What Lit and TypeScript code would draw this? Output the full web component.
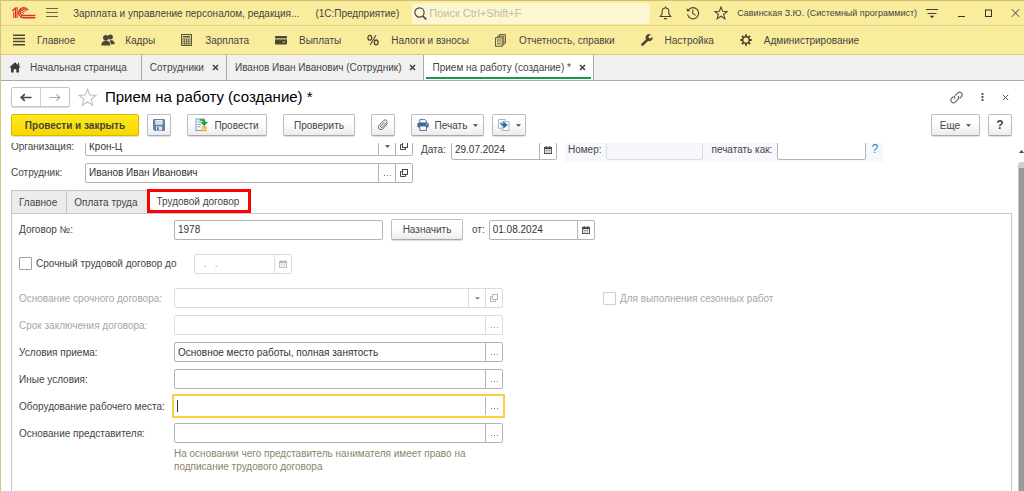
import { LitElement, html, css, svg, TemplateResult } from "lit";
import { customElement, state } from "lit/decorators.js";
import { classMap } from "lit/directives/class-map.js";

const icon = (w: number, h: number, body: unknown, cls = "") =>
  html`<svg class="ico ${cls}" width=${w} height=${h} viewBox="0 0 ${w} ${h}" aria-hidden="true">${body}</svg>`;

const logo = icon(26, 14, svg`
  <g fill="none" stroke="#d9302c">
    <path d="M1.2 4.8 4.6 2.2V12" stroke-width="1.4"/>
    <path d="M2.8 5.4V12M6.2 1V12" stroke-width="1"/>
    <path d="M17 4.2A5 5 0 1 0 12.6 11.8H24.4" stroke-width="1.5"/>
    <path d="M15 5.2A2.9 2.9 0 1 0 12.8 9.5H24.4" stroke-width="1.3"/>
    <path d="M13.6 6.2a1 1 0 1 0-.6 1.3" stroke-width="1"/>
  </g>`);
const burger = icon(12, 12, svg`<path d="M0 1.5H12M0 5.5H12M0 9.5H12" stroke="#6b6644" stroke-width="1"/>`);
const magnifier = icon(13, 13, svg`<circle cx="5.5" cy="5.5" r="4.6" fill="none" stroke="#444" stroke-width="1.2"/><path d="M8.8 9 12.2 12.4" stroke="#444" stroke-width="1.6"/>`);
const bell = icon(13, 14, svg`<path d="M1 10.5H12L9.9 8.2V5.4A3.4 3.4 0 0 0 3.1 5.4V8.2Z" fill="none" stroke="#444" stroke-width="1.1" stroke-linejoin="round"/><path d="M6.5 2V.6M5 12.6H8" stroke="#444" stroke-width="1.2"/>`);
const history = icon(14, 14, svg`<path d="M2.4 4A5.6 5.6 0 1 1 1.5 8.4M6.8 3.4V7.4L9.6 9.4" fill="none" stroke="#4a4734" stroke-width="1.1"/><path d="M.4 2.2 1.2 5.6 4.6 4.9Z" fill="#4a4734"/>`);
const starPath = "M9 1.2 11.1 6.7 17 7 12.4 10.7 14 16.4 9 13.2 4 16.4 5.6 10.7 1 7 6.9 6.7Z";
const star = html`<svg class="ico" width="14" height="14" viewBox="0 0 18 18" aria-hidden="true"><path d=${starPath} fill="none" stroke="#4a4734" stroke-width="1.4"/></svg>`;
const bigStar = html`<svg class="ico" width="19" height="19" viewBox="0 0 18 18" aria-hidden="true"><path d=${starPath} fill="none" stroke="#b9bdc4" stroke-width="1"/></svg>`;
const userMenu = icon(13, 13, svg`<path d="M0 2.5H12M1.5 6.5H10.5" stroke="#444" stroke-width="1.1"/><path d="M3.8 8.8H8.2L6 11.2Z" fill="#333"/>`);
const winMin = icon(9, 10, svg`<path d="M1 8.5H8" stroke="#333"/>`);
const winMax = icon(9, 10, svg`<rect x="1.5" y="2" width="6" height="6.5" fill="none" stroke="#333"/>`);
const winClose = icon(9, 10, svg`<path d="M.8 1.2 8.2 8.8M8.2 1.2.8 8.8" stroke="#444" stroke-width="1"/>`);

const mList = icon(12, 12, svg`<path d="M0 1.2H12M0 4.4H12M0 7.6H12M0 10.8H12" stroke="#4a4734" stroke-width="1.5"/>`);
const mPeople = icon(14, 12, svg`<g fill="#4a4734"><circle cx="9.4" cy="3" r="2.5"/><path d="M8.6 6.2H11C13 6.8 13.6 8 13.6 10.2H10Z"/><circle cx="4.8" cy="3.8" r="2.7"/><path d="M.3 11.6C.3 8.6 1.6 7.6 4 6.6H5.8C8.4 7.6 9.3 8.6 9.3 11.6Z"/></g>`);
const mCalc = icon(11, 12, svg`<rect x=".6" y=".6" width="9.8" height="10.8" fill="none" stroke="#4a4734" stroke-width="1"/><path d="M2 2.8H9" stroke="#4a4734" stroke-width="1.4"/><path d="M1 5H10M1 7.2H10M1 9.3H10M3.3 5V11M5.5 5V11M7.7 5V11" stroke="#4a4734" stroke-width=".7"/>`);
const mCard = icon(12, 12, svg`<rect x="0" y="2" width="12" height="8.4" rx="1" fill="#4a4734"/><path d="M0 4.9H12" stroke="#faec9d" stroke-width="1"/><path d="M7.6 8H10.4" stroke="#faec9d" stroke-width=".8"/>`);
const mPercent = icon(12, 12, svg`<g fill="none" stroke="#4a4734"><ellipse cx="2.8" cy="3.8" rx="1.9" ry="2.4" stroke-width="1.3"/><ellipse cx="9.2" cy="8.4" rx="1.9" ry="2.4" stroke-width="1.3"/><path d="M8.9 1.2 3.1 11" stroke-width="1.1"/></g>`);
const mDocs = icon(11, 13, svg`<g fill="none" stroke="#4a4734" stroke-width=".9"><path d="M4.4 2V.6H10.4V9.2H9.2M2.6 3.6V2.2H8.8V10.8H7.4"/><rect x=".6" y="3.8" width="6.6" height="8.4"/><path d="M2 6H5.8M2 7.8H3.6M2 9.8H5.8M4.6 7.8H5.8"/></g>`);
const mWrench = icon(12, 12, svg`<path d="M1.5 10.5 6.6 5.6" stroke="#4a4734" stroke-width="2.6" stroke-linecap="round"/><path d="M9.9.6A3.6 3.6 0 1 0 11.6 3L9.2 4.4 7.7 3.9 7.6 2.2Z" fill="#4a4734"/>`);
const mGear = icon(12, 12, svg`<circle cx="6" cy="6" r="3.3" fill="none" stroke="#4a4734" stroke-width="1.5"/><g stroke="#4a4734" stroke-width="1.9"><path d="M6 .2V2.4M6 9.6V11.8M.2 6H2.4M9.6 6H11.8M1.9 1.9 3.4 3.4M8.6 8.6 10.1 10.1M1.9 10.1 3.4 8.6M8.6 3.4 10.1 1.9"/></g>`);
const home = icon(12, 11, svg`<path d="M6 .3 11.8 5.6H10V10.6H7.3V7.2H4.7V10.6H2V5.6H.2Z" fill="#3c3c3c"/><path d="M9 .8H10.2V4H9Z" fill="#3c3c3c"/>`);
const cross = icon(7, 7, svg`<path d="M1 1 6 6M6 1 1 6" stroke="#444" stroke-width="1.6"/>`);

const arrowL = icon(12, 9, svg`<path d="M11.5 4.5H2M4.8 1.2 1.2 4.5 4.8 7.8" fill="none" stroke="#444" stroke-width="1.6"/>`);
const arrowR = icon(12, 9, svg`<path d="M.5 4.5H10.4M7.4 1.4 10.8 4.5 7.4 7.6" fill="none" stroke="#aaa" stroke-width="1.2"/>`);
const save = icon(12, 12, svg`<path d="M.6.6H11.4V11.4H1.6L.6 10.4Z" fill="#5d86ad" stroke="#44688c" stroke-width=".8"/><rect x="2.4" y="1" width="7.2" height="4.6" fill="#f4f7fa"/><path d="M3.2 2.6H8.8M3.2 4.1H8.8" stroke="#9db4c9" stroke-width=".6"/><rect x="3" y="7.4" width="6" height="4" fill="#dbe5ee"/><rect x="4" y="8.2" width="1.6" height="2.6" fill="#44688c"/>`);
const post = icon(13, 14, svg`<rect x="1" y="1" width="8.4" height="11.6" fill="#f3f7fb" stroke="#6e8fb0" stroke-width=".9"/><path d="M2.6 4H6M2.6 6.4H6M2.6 8.8H5" stroke="#6e8fb0" stroke-width=".8"/><path d="M4.6 1.2C8 .5 10.6 1.6 10.8 4H13L9.2 8 5.4 4H7.8C7.8 3 6.6 2.6 4.6 2.8Z" fill="#20a34a"/><path d="M6.6 8.6H12V13.2H6.6Z" fill="#e8b83e"/><path d="M6.6 10.2H12M6.6 11.7H12" stroke="#fbe9ad" stroke-width=".6"/>`);
const clip = icon(12, 12, svg`<path d="M10.6 4.4 5.8 9.8A2.5 2.5 0 0 1 2 6.4L6.8 1.4A1.8 1.8 0 0 1 9.4 3.9L5.2 8.4A1 1 0 0 1 3.8 7L7.6 3" fill="none" stroke="#666" stroke-width="1"/>`);
const printer = icon(12, 12, svg`<path d="M2.8.6H8L9.4 2V4H2.8Z" fill="#fff" stroke="#3f6a92" stroke-width=".9"/><rect x=".4" y="3.8" width="11.2" height="4.8" rx="1" fill="#3f6a92"/><rect x="2.8" y="7" width="6.6" height="4.4" fill="#fff" stroke="#3f6a92" stroke-width=".9"/><path d="M9 5.2H10.4" stroke="#fff" stroke-width=".8"/>`);
const basedOn = icon(12, 12, svg`<rect x=".6" y=".6" width="6.6" height="8.6" fill="#fff" stroke="#8ea6bc" stroke-width=".8"/><rect x="4" y="2.8" width="7" height="8.6" fill="#fff" stroke="#8ea6bc" stroke-width=".8"/><path d="M1.8 3C2 5.6 3.4 6.8 5.2 6.8V9.8L9.8 6 5.2 2.5V5C4 5 2.8 4.6 1.8 3Z" fill="#2c6496"/>`);
const caret = icon(5, 3, svg`<path d="M0 .2H5L2.5 2.8Z" fill="#444"/>`);
const link = icon(13, 13, svg`<g fill="none" stroke="#666" stroke-width="1.1"><path d="M5 8A2.7 2.7 0 0 1 5.4 4.4L7.8 1.9A2.6 2.6 0 0 1 11.6 5.4L9.6 7.6"/><path d="M8 5A2.7 2.7 0 0 1 7.6 8.6L5.2 11.1A2.6 2.6 0 0 1 1.4 7.6L3.4 5.4"/></g>`);
const kebab = icon(3, 10, svg`<path d="M.5 1H2.5V3H.5ZM.5 4H2.5V6H.5ZM.5 7H2.5V9H.5Z" fill="#555"/>`);
const thinX = icon(7, 7, svg`<path d="M.8.8 6.2 6.2M6.2.8.8 6.2" stroke="#555" stroke-width="1"/>`);
const openIco = icon(8, 8, svg`<g fill="none" stroke="currentColor" stroke-width="1"><rect x="2.5" y=".5" width="5" height="5"/><path d="M1.9 2.5H.5V7.5H5.5V6"/></g>`);
const calendar = icon(8, 8, svg`<rect x=".4" y="1.4" width="7.2" height="6.2" fill="none" stroke="currentColor" stroke-width=".9"/><path d="M.4 2.4H7.6" stroke="currentColor" stroke-width="1.6"/><path d="M2.2 0V2M5.8 0V2" stroke="currentColor" stroke-width="1.1"/><path d="M1.6 4.4H6.4M1.6 6H6.4" stroke="currentColor" stroke-width=".9" stroke-dasharray="1 .8"/>`);
const dots = icon(7, 2, svg`<path d="M0 0H1V1H0ZM3 0H4V1H3ZM6 0H7V1H6Z" fill="#777"/>`, "dots");
const scrollUp = icon(5, 3, svg`<path d="M0 3H5L2.5 0Z" fill="#444"/>`);

const glyphs: Record<string, TemplateResult> = { pick: dots, open: openIco, drop: caret, date: calendar };
const glyphNames: Record<string, string> = { pick: "Выбрать", open: "Открыть", drop: "Список", date: "Календарь" };

interface FieldOptions { value?: string; buttons?: string[]; size?: string; disabled?: boolean; focused?: boolean; }

@customElement("app-root")
export class AppRoot extends LitElement {
  static styles = css`
    :host { display: block; height: 100vh; font: 10px/13px "Liberation Sans", Arial, sans-serif; color: #444; }
    * { box-sizing: border-box; }
    button, input { font: inherit; color: inherit; margin: 0; padding: 0; }
    button { background: none; border: 0; white-space: nowrap; }
    svg { display: block; flex: none; }
    .window { display: flex; flex-direction: column; height: 100%; background: #fff; border-left: 1px solid #d2c480; overflow: hidden; }
    .titlebar { display: flex; align-items: center; height: 26px; flex: none; padding: 0 4px 0 10px; background: #faec9d; border-top: 1px solid #d2bf6e; border-bottom: 1px solid #dfd083; white-space: nowrap; }
    .appname { padding-left: 15px; }
    .platform { padding-left: 16px; }
    .burger { padding-left: 9px; }
    .search { display: flex; align-items: center; gap: 2px; flex: 0 1 238px; height: 21px; margin: 0 9px 0 13px; padding-left: 2px; background: #fdf6d2; border-radius: 3px; }
    .search input { flex: 1; min-width: 0; border: 0; background: none; outline: 0; font-size: 11px; }
    .search input::placeholder { color: #c3bda0; opacity: 1; }
    .sys { display: flex; align-items: center; gap: 14px; }
    .user { padding: 0 9px; font-size: 9px; }
    .winbtns { display: flex; gap: 18px; margin-left: auto; }
    .menu { display: flex; align-items: center; gap: 26px; height: 29px; flex: none; padding-left: 12px; background: #faec9d; border-bottom: 1px solid #dccb7c; }
    .menu a { display: flex; align-items: center; color: #444; text-decoration: none; white-space: nowrap; }
    .menu .slot { width: 24px; }
    .tabs { display: flex; height: 26px; flex: none; background: #f0f0f0; border-bottom: 1px solid #a9a9a9; }
    .tab { display: flex; align-items: center; gap: 8px; padding: 0 7px 0 8px; border-right: 1px solid #a9a9a9; white-space: nowrap; }
    .tab.home { gap: 9px; padding: 0 14px 0 8px; }
    .tab.active { position: relative; background: #fff; }
    .tab.active::after { content: ""; position: absolute; left: 2px; right: 2px; bottom: 1px; height: 2px; background: #159a4c; }
    .head { display: flex; align-items: center; height: 32px; flex: none; padding: 0 15px 0 10px; }
    .nav { display: flex; width: 59px; height: 20px; border: 1px solid #c4c4c4; border-radius: 2px; box-shadow: 0 1px 1px #ddd; }
    .nav button { flex: 1; display: grid; place-items: center; }
    .nav button + button { border-left: 1px solid #d0d0d0; }
    .fav { padding: 0 8px; }
    h1 { margin: 0; font: 15px/20px "Liberation Sans", Arial, sans-serif; color: #000; }
    .headicons { display: flex; align-items: center; gap: 18px; margin-left: auto; }
    .cmds { display: flex; gap: 16px; height: 30px; flex: none; padding: 1px 12px 0 10px; align-items: flex-start; }
    .group { display: flex; gap: 8px; }
    .push { margin-left: auto; }
    .btn { display: flex; align-items: center; justify-content: center; gap: 6px; height: 22px; padding: 0; color: #444; background: linear-gradient(#fff 40%, #ececec); border: 1px solid #bdbdbd; border-bottom-color: #a8a8a8; border-radius: 2px; box-shadow: 0 1px 1px #ddd; }
    .btn.main { width: 128px; font-weight: bold; background: linear-gradient(#ffe81c, #f7d800); border-color: #d8b900; }
    .btn.small { width: 24px; }
    .btn.post { width: 80px; }
    .btn.check { width: 72px; }
    .btn.print { width: 73px; }
    .btn.based { width: 34px; }
    .btn.more { width: 49px; }
    .btn.assign { width: 72px; height: 21px; margin-left: 8px; }
    .btn .q { font-size: 12px; font-weight: bold; }
    .body { display: flex; flex: 1; min-height: 0; }
    .form { flex: 1; display: flex; flex-direction: column; min-width: 0; overflow: hidden; padding: 0 6px 0 10px; }
    .topfields { display: flex; flex: none; align-items: center; height: 25px; margin-top: -6px; }
    .lbl { width: 74px; flex: none; white-space: nowrap; }
    .org { display: flex; align-items: center; padding-bottom: 7px; }
    .date { display: flex; align-items: center; gap: 5px; padding-left: 8px; }
    .numbox { display: flex; align-items: center; align-self: stretch; gap: 5px; margin-left: 8px; padding-left: 3px; background: #f7f8fe; }
    .as { padding-left: 3px; }
    .help { width: 12px; color: #1a84c9; font-size: 12px; text-decoration: none; }
    .person { display: flex; align-items: center; flex: none; height: 21px; }
    .field { display: flex; height: 20px; background: #fff; border: 1px solid #b4b4b4; border-radius: 2px; color: #333; }
    .field input { flex: 1; min-width: 0; width: 0; padding: 0 3px; border: 0; outline: 0; background: none; color: #333; }
    .field button { width: 17px; display: grid; place-items: center; border-left: 1px solid #b4b4b4; color: #444; }
    .field button .dots { margin-top: 6px; }
    .field.off { border-color: #dcdcdc; }
    .field.off button { border-color: #dcdcdc; color: #999; }
    .field.off input { color: #999; }
    .field.off .ico { opacity: 0.7; }
    .field.wide { width: 328px; }
    .field.row { width: 329px; }
    .field.num { width: 209px; }
    .field.day { width: 106px; }
    .field.until { width: 98px; }
    .field.short { width: 97px; background: none; }
    .field.as-print { width: 89px; }
    .field.focused { height: 24px; width: 333px; margin: -2px; border: 2px solid #fad03c; border-radius: 0; padding: 1px; }
    .field.focused input { padding: 0 2px; background: linear-gradient(#333, #333) 2px 50% / 1px 12px no-repeat; }
    .pagetabs { display: flex; flex: none; margin-top: 6px; height: 24px; }
    .pagetab { height: 23px; margin-top: 1px; padding: 0 9px 0 7px; background: #ececec; border: 1px solid #c4c4c4; border-right: 0; border-bottom: 0; }
    .pagetab.active { height: 24px; margin-top: 0; background: #fff; border: 3px solid #f00; }
    .panel { flex: 1; border: 1px solid #c8c8c8; border-bottom: 0; padding: 5px 7px 0; }
    .line { display: flex; align-items: center; height: 21px; }
    .term { margin: 13px 0 14px; }
    .tick { appearance: none; width: 13px; height: 13px; flex: none; margin-right: 4px; border: 1px solid #a0a0a0; border-radius: 1px; background: #fff; }
    .tick:disabled { border-color: #cfcfcf; }
    .term label { width: 158px; }
    .from { padding: 0 4px 0 9px; }
    .grid { display: grid; grid-template-columns: 155px 329px auto; row-gap: 7px; grid-auto-rows: 20px; align-items: center; }
    .grid > label { grid-column: 1; white-space: nowrap; }
    .muted { color: #a6a6a6; }
    .season { display: flex; align-items: center; grid-column: 3; padding-left: 100px; color: #a6a6a6; white-space: nowrap; }
    .lbl2 { width: 155px; }
    .hint { max-width: 300px; margin: 4px 0 0 155px; color: #8c8469; }
    .scroll { width: 6px; flex: none; display: flex; flex-direction: column; align-items: center; padding-top: 7px; }
    .thumb { flex: 1; width: 6px; margin-top: 9px; background: #999; border-left: 1px solid #c6c6c6; border-top: 6px solid #d0d0d0; border-radius: 3px 0 0 0; }
  `;

  @state() private page = "Трудовой договор";

  private menu: [TemplateResult, string][] = [
    [mList, "Главное"], [mPeople, "Кадры"], [mCalc, "Зарплата"], [mCard, "Выплаты"],
    [mPercent, "Налоги и взносы"], [mDocs, "Отчетность, справки"], [mWrench, "Настройка"], [mGear, "Администрирование"],
  ];

  private field(id: string, o: FieldOptions = {}) {
    const cls = { field: true, [o.size ?? "row"]: true, off: !!o.disabled, focused: !!o.focused };
    return html`<div class=${classMap(cls)}>
      <input id=${id} type="text" .value=${o.value ?? ""} ?disabled=${o.disabled} />
      ${(o.buttons ?? []).map((b) => html`<button type="button" aria-label=${glyphNames[b]} ?disabled=${o.disabled}>${glyphs[b]}</button>`)}
    </div>`;
  }

  private row(id: string, label: string, o: FieldOptions = {}) {
    return html`<label for=${id} class=${o.disabled ? "muted" : ""}>${label}</label>${this.field(id, o)}`;
  }

  render() {
    return html`<div class="window">
      <header class="titlebar">
        ${logo}
        <button class="burger" aria-label="Меню">${burger}</button>
        <span class="appname">Зарплата и управление персоналом, редакция...</span>
        <span class="platform">(1С:Предприятие)</span>
        <label class="search">${magnifier}<input type="search" placeholder="Поиск Ctrl+Shift+F" /></label>
        <div class="sys">
          <button aria-label="Уведомления">${bell}</button>
          <button aria-label="История">${history}</button>
          <button aria-label="Избранное">${star}</button>
        </div>
        <span class="user">Савинская З.Ю. (Системный программист)</span>
        <button aria-label="Настройки">${userMenu}</button>
        <div class="winbtns">
          <button aria-label="Свернуть">${winMin}</button>
          <button aria-label="Развернуть">${winMax}</button>
          <button aria-label="Закрыть">${winClose}</button>
        </div>
      </header>
      <nav class="menu">
        ${this.menu.map(([i, t]) => html`<a href="#"><span class="slot">${i}</span>${t}</a>`)}
      </nav>
      <div class="tabs">
        <div class="tab home">${home}<span>Начальная страница</span></div>
        <div class="tab"><span>Сотрудники</span><button aria-label="Закрыть">${cross}</button></div>
        <div class="tab"><span>Иванов Иван Иванович (Сотрудник)</span><button aria-label="Закрыть">${cross}</button></div>
        <div class="tab active"><span>Прием на работу (создание) *</span><button aria-label="Закрыть">${cross}</button></div>
      </div>
      <div class="head">
        <div class="nav"><button aria-label="Назад">${arrowL}</button><button aria-label="Вперед">${arrowR}</button></div>
        <button class="fav" aria-label="В избранное">${bigStar}</button>
        <h1>Прием на работу (создание) *</h1>
        <div class="headicons">
          <button aria-label="Ссылка">${link}</button>
          <button aria-label="Еще">${kebab}</button>
          <button aria-label="Закрыть">${thinX}</button>
        </div>
      </div>
      <div class="cmds">
        <div class="group">
          <button class="btn main">Провести и закрыть</button>
          <button class="btn small" aria-label="Записать">${save}</button>
        </div>
        <button class="btn post">${post}Провести</button>
        <button class="btn check">Проверить</button>
        <button class="btn small" aria-label="Файлы">${clip}</button>
        <div class="group">
          <button class="btn print">${printer}Печать${caret}</button>
          <button class="btn based" aria-label="Создать на основании">${basedOn}${caret}</button>
        </div>
        <div class="group push">
          <button class="btn more">Еще${caret}</button>
          <button class="btn small" aria-label="Справка"><span class="q">?</span></button>
        </div>
      </div>
      <div class="body">
        <main class="form">
          <div class="topfields">
            <div class="org"><label class="lbl" for="org">Организация:</label>${this.field("org", { value: "Крон-Ц", size: "wide", buttons: ["drop", "open"] })}</div>
            <div class="date"><label for="date">Дата:</label>${this.field("date", { value: "29.07.2024", size: "day", buttons: ["date"] })}</div>
            <div class="numbox">
              <label for="number">Номер:</label>${this.field("number", { size: "short", disabled: true })}
              <label class="as" for="printas">печатать как:</label>${this.field("printas", { size: "as-print" })}
              <a class="help" href="#">?</a>
            </div>
          </div>
          <div class="person"><label class="lbl" for="person">Сотрудник:</label>${this.field("person", { value: "Иванов Иван Иванович", size: "wide", buttons: ["pick", "open"] })}</div>
          <div class="pagetabs">
            ${["Главное", "Оплата труда", "Трудовой договор"].map((t) => html`<button class=${classMap({ pagetab: true, active: t === this.page })} @click=${() => (this.page = t)}>${t}</button>`)}
          </div>
          <section class="panel">
            <div class="line">
              <label class="lbl2" for="contract">Договор №:</label>${this.field("contract", { value: "1978", size: "num" })}
              <button class="btn assign">Назначить</button>
              <label class="from" for="contractdate">от:</label>${this.field("contractdate", { value: "01.08.2024", size: "day", buttons: ["date"] })}
            </div>
            <div class="line term">
              <input class="tick" type="checkbox" id="fixed" /><label for="fixed">Срочный трудовой договор до</label>
              ${this.field("until", { value: "  .   .", size: "until", disabled: true, buttons: ["date"] })}
            </div>
            <div class="grid">
              ${this.row("basis", "Основание срочного договора:", { disabled: true, buttons: ["drop", "open"] })}
              <div class="season"><input class="tick" type="checkbox" id="season" disabled /><label for="season">Для выполнения сезонных работ</label></div>
              ${this.row("period", "Срок заключения договора:", { disabled: true, buttons: ["pick"] })}
              ${this.row("terms", "Условия приема:", { value: "Основное место работы, полная занятость", buttons: ["pick"] })}
              ${this.row("other", "Иные условия:", { buttons: ["pick"] })}
              ${this.row("equipment", "Оборудование рабочего места:", { focused: true, buttons: ["pick"] })}
              ${this.row("agent", "Основание представителя:", { buttons: ["pick"] })}
            </div>
            <p class="hint">На основании чего представитель нанимателя имеет право на подписание трудового договора</p>
          </section>
        </main>
        <div class="scroll">${scrollUp}<div class="thumb"></div></div>
      </div>
    </div>`;
  }
}
